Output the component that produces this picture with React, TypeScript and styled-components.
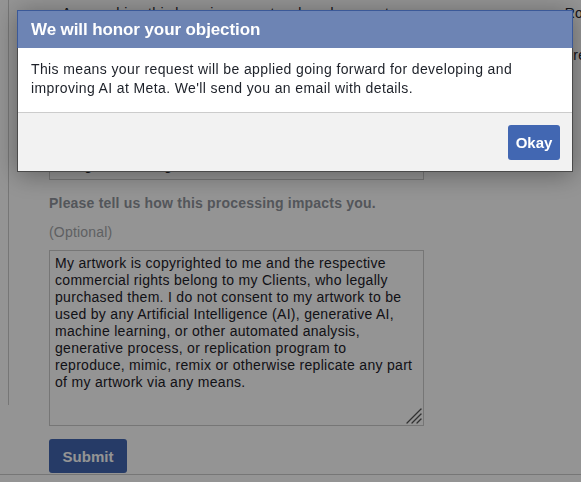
import styled, { createGlobalStyle } from 'styled-components'

const GlobalStyle = createGlobalStyle`
  html, body {
    margin: 0;
    padding: 0;
    background: #ffffff;
    font-family: 'Liberation Sans', Arial, sans-serif;
  }
`

// Page behind the dialog
const Page = styled.div`
  width: 581px;
  height: 482px;
  overflow: hidden;
  display: flex;
  flex-direction: column;
  background: #fff;
`

const Main = styled.div`
  display: grid;
  grid-template-columns: 9px 1fr;
  height: 474px;
`

const Rail = styled.div`
  height: 405px;
  border-right: 1px solid #cccccc;
`

const Content = styled.div`
  padding-left: 40px;
  display: flex;
  flex-direction: column;
  align-items: flex-start;
  min-width: 0;
`

const IntroList = styled.ul`
  margin: -18px 0 0 0;
  padding-left: 13px;
  list-style: none;
  font-size: 14px;
  line-height: 21px;
  letter-spacing: 0.3px;
  color: #1d2129;
  white-space: nowrap;
`

const IntroLine = styled.li<{ $width?: number }>`
  display: flex;
  justify-content: space-between;
  width: ${(p) => (p.$width ? `${p.$width}px` : 'auto')};
  height: 21px;
`

const TextInput = styled.div`
  margin-top: 38px;
  width: 363px;
  height: 24px;
  border: 1px solid #cccccc;
  font-size: 14px;
  line-height: 20px;
  letter-spacing: 0.3px;
  padding: 8px 5px 0;
  box-sizing: content-box;
  color: #1d2129;
  overflow: hidden;
  white-space: nowrap;
`

const FieldLabel = styled.div`
  margin-top: 15px;
  font-size: 14px;
  line-height: 16px;
  letter-spacing: 0.2px;
  font-weight: bold;
  color: #90949c;
`

const Hint = styled.div`
  margin-top: 13px;
  font-size: 14px;
  line-height: 16px;
  letter-spacing: 0.2px;
  color: #a4a6aa;
`

const TextAreaWrap = styled.div`
  position: relative;
  margin-top: 10px;
  width: 375px;
  height: 176px;
`

const TextArea = styled.textarea`
  display: block;
  width: 100%;
  height: 100%;
  box-sizing: border-box;
  border: 1px solid #cccccc;
  padding: 4px 5px;
  font-family: 'Liberation Sans', Arial, sans-serif;
  font-size: 14px;
  line-height: 17px;
  letter-spacing: 0.3px;
  color: #1d2129;
  background: #fff;
  outline: none;
  resize: none;
`

const Grip = styled.svg`
  position: absolute;
  right: 2px;
  bottom: 2px;
  width: 17px;
  height: 17px;
`

const SubmitButton = styled.button`
  margin-top: 13px;
  width: 78px;
  height: 34px;
  border: none;
  border-radius: 3px;
  background: #4267b2;
  color: #ffffff;
  font-family: 'Liberation Sans', Arial, sans-serif;
  font-size: 15px;
  font-weight: bold;
  padding: 0;
`

const PageFooter = styled.div`
  flex: 1;
  border-top: 1px solid #cccccc;
`

// Modal
const Overlay = styled.div`
  position: fixed;
  inset: 0;
  background: rgba(0, 0, 0, 0.42);
`

const Dialog = styled.div`
  position: absolute;
  top: 10px;
  left: 17px;
  width: 556px;
  background: #fff;
  border: 1px solid #4a4a4a;
  box-sizing: border-box;
  box-shadow: 0 3px 24px rgba(0, 0, 0, 0.35);
`

const DialogHeader = styled.div`
  height: 37px;
  margin: -1px -1px 0;
  border: 1px solid #3b5998;
  border-bottom: none;
  background: #6d84b4;
  color: #ffffff;
  font-size: 17px;
  letter-spacing: -0.1px;
  font-weight: bold;
  display: flex;
  align-items: center;
  padding-left: 13px;
`

const DialogBody = styled.div`
  padding: 12px 13px 14px;
  font-size: 14px;
  line-height: 19px;
  letter-spacing: 0.38px;
  color: #1d2129;
`

const DialogFooter = styled.div`
  height: 59px;
  background: #f2f2f2;
  border-top: 1px solid #cccccc;
  display: flex;
  justify-content: flex-end;
  align-items: flex-start;
  padding: 12px 12px 0 0;
  box-sizing: border-box;
`

const OkayButton = styled.button`
  width: 52px;
  height: 35px;
  border: none;
  border-radius: 3px;
  background: #4267b2;
  color: #fff;
  font-family: 'Liberation Sans', Arial, sans-serif;
  font-size: 15px;
  font-weight: bold;
  padding: 0;
`

const textValue =
  'My artwork is copyrighted to me and the respective commercial rights belong to my Clients, who legally purchased them. I do not consent to my artwork to be used by any Artificial Intelligence (AI), generative AI, machine learning, or other automated analysis, generative process, or replication program to reproduce, mimic, remix or otherwise replicate any part of my artwork via any means.'

function App() {
  return (
    <>
      <GlobalStyle />
      <Page>
        <Main>
          <Rail />
          <Content>
            <IntroList>
              <IntroLine>Any personal information that you may have collected about me</IntroLine>
              <IntroLine $width={540}>
                <span>Approaching this by using my artwork and my posts</span>
                <span>Roles</span>
              </IntroLine>
              <IntroLine>Generative AI models trained on my work</IntroLine>
              <IntroLine $width={560}>
                <span>I object to any use of my information and I'd like a</span>
                <span>request</span>
              </IntroLine>
              <IntroLine>to be confirmed.</IntroLine>
              <IntroLine>What is your reason?</IntroLine>
            </IntroList>
            <TextInput>Using the drawings without consent</TextInput>
            <FieldLabel>Please tell us how this processing impacts you.</FieldLabel>
            <Hint>(Optional)</Hint>
            <TextAreaWrap>
              <TextArea defaultValue={textValue} spellCheck={false} />
              <Grip viewBox="0 0 17 17">
                <g stroke="#555" strokeWidth="1.3" strokeLinecap="round">
                  <line x1="16" y1="2" x2="2" y2="16" />
                  <line x1="16" y1="7" x2="7" y2="16" />
                  <line x1="16" y1="12" x2="12" y2="16" />
                </g>
              </Grip>
            </TextAreaWrap>
            <SubmitButton>Submit</SubmitButton>
          </Content>
        </Main>
        <PageFooter />
      </Page>
      <Overlay>
        <Dialog>
          <DialogHeader>We will honor your objection</DialogHeader>
          <DialogBody>
            This means your request will be applied going forward for developing and improving AI at Meta. We'll send you an email with details.
          </DialogBody>
          <DialogFooter>
            <OkayButton>Okay</OkayButton>
          </DialogFooter>
        </Dialog>
      </Overlay>
    </>
  )
}

export default App
